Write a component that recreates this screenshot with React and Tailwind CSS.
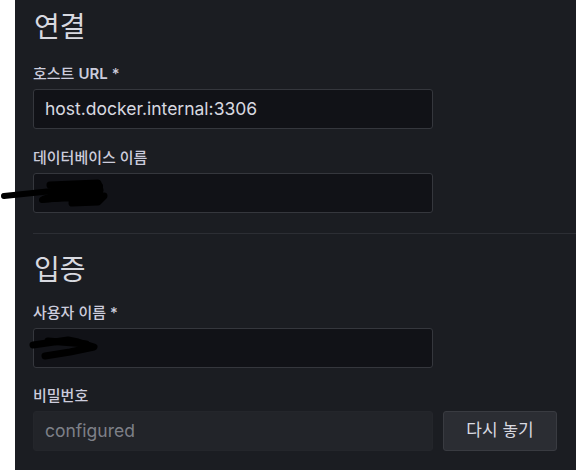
import React from 'react';

const font = { fontFamily: 'Inter, "Noto Sans CJK KR", sans-serif' };

function Field({ label, required, children, className = '' }) {
  return (
    <div className={className}>
      <div className="h-[20px] text-[15px] leading-[20px] text-[#ccccdc] font-medium">
        {label}
        {required && <span> *</span>}
      </div>
      <div className="mt-[5px]">{children}</div>
    </div>
  );
}

function TextBox({ value }) {
  return (
    <div className="w-[400px] h-[40px] rounded-[3px] border border-[#35373d] bg-[#111217] px-[11px] flex items-center text-[17.5px] text-[#d8d9e0]">
      {value}
    </div>
  );
}

function Scribbles() {
  return (
    <svg className="absolute left-0 top-0 pointer-events-none" width="576" height="470">
      <g stroke="#000" strokeLinecap="round" strokeLinejoin="round" fill="none">
        <path d="M4 196 C30 193 60 190 100 186" strokeWidth="6" />
        <path d="M50 185 L98 183 L100 190 L60 194 L44 199 L104 196 L98 202 L72 203" strokeWidth="7" />
        <path d="M42 200 L70 197" strokeWidth="6" />
        <path d="M33 345 L68 340 L78 342 L94 347 L70 352 L45 356" strokeWidth="7" />
        <path d="M48 341 L86 344" strokeWidth="7" />
      </g>
    </svg>
  );
}

export default function App() {
  return (
    <div className="relative flex w-[576px] h-[470px] bg-white overflow-hidden" style={font}>
      <div className="w-[15px] shrink-0 bg-white" />
      <div className="flex-1 bg-[#1b1d22] pl-[18px]">
        <h2 className="pt-[9px] text-[28px] leading-[36px] text-[#d8d9e0] font-normal pl-[1px]">연결</h2>
        <Field label={<>호스트 <span className="font-semibold">URL</span></>} required className="mt-[19px]">
          <TextBox value="host.docker.internal:3306" />
        </Field>
        <Field label="데이터베이스 이름" className="mt-[19px]">
          <TextBox value="" />
        </Field>
        <div className="mt-[20px] h-px bg-[#2c2e34]" />
        <h2 className="mt-[18px] text-[28px] leading-[36px] text-[#d8d9e0] font-normal pl-[1px]">입증</h2>
        <Field label="사용자 이름" required className="mt-[15px]">
          <TextBox value="" />
        </Field>
        <Field label="비밀번호" className="mt-[18px]">
          <div className="flex gap-[10px]">
            <div className="w-[400px] h-[40px] rounded-[3px] border border-[#24262b] bg-[#222429] px-[11px] flex items-center text-[17.5px] text-[#7e8088]">
              configured
            </div>
            <button className="w-[114px] h-[40px] rounded-[3px] border border-[#393b41] bg-[#2b2d33] text-[17px] text-[#d8d9e0]">
              다시 놓기
            </button>
          </div>
        </Field>
      </div>
      <Scribbles />
    </div>
  );
}
